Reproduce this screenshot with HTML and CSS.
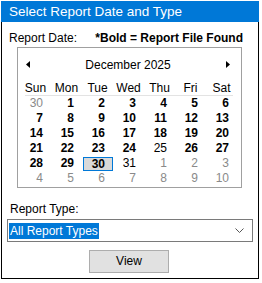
FILE: index.html
```html
<!DOCTYPE html>
<html>
<head>
<meta charset="utf-8">
<link rel="stylesheet" href="styles.css">
</head>
<body>
<div class="panel">
  <div class="title">Select Report Date and Type</div>
  <div class="body">
    <div class="date-row">
      <span>Report Date:</span>
      <span class="legend">*Bold = Report File Found</span>
    </div>
    <div class="calendar">
      <div class="cal-head">
        <svg class="arrow" width="4" height="7" viewBox="0 0 4 7"><path d="M4 0 L0 3.5 L4 7 Z" fill="#000"/></svg>
        <span class="month">December 2025</span>
        <svg class="arrow" width="4" height="7" viewBox="0 0 4 7"><path d="M0 0 L4 3.5 L0 7 Z" fill="#000"/></svg>
      </div>
      <div class="grid dows">
        <span>Sun</span><span>Mon</span><span>Tue</span><span>Wed</span><span>Thu</span><span>Fri</span><span>Sat</span>
      </div>
      <div class="sep"></div>
      <div class="grid days">
        <span class="o">30</span><span class="b">1</span><span class="b">2</span><span class="b">3</span><span class="b">4</span><span class="b">5</span><span class="b">6</span>
        <span class="b">7</span><span class="b">8</span><span class="b">9</span><span class="b">10</span><span class="b">11</span><span class="b">12</span><span class="b">13</span>
        <span class="b">14</span><span class="b">15</span><span class="b">16</span><span class="b">17</span><span class="b">18</span><span class="b">19</span><span class="b">20</span>
        <span class="b">21</span><span class="b">22</span><span class="b">23</span><span class="b">24</span><span>25</span><span class="b">26</span><span class="b">27</span>
        <span class="b">28</span><span class="b">29</span><span class="b sel">30</span><span>31</span><span class="o">1</span><span class="o">2</span><span class="o">3</span>
        <span class="o">4</span><span class="o">5</span><span class="o">6</span><span class="o">7</span><span class="o">8</span><span class="o">9</span><span class="o">10</span>
      </div>
    </div>
    <div class="type-label">Report Type:</div>
    <div class="select">
      <span class="hl">All Report Types</span>
      <svg class="chev" width="9" height="5" viewBox="0 0 9 5"><path d="M0.5 0.5 L4.5 4.5 L8.5 0.5" fill="none" stroke="#555" stroke-width="1"/></svg>
    </div>
    <div class="btn-row">
      <div class="btn">View</div>
    </div>
  </div>
</div>
</body>
</html>
```
FILE: styles.css
```css
html, body {
  margin: 0;
  padding: 0;
  background: #fff;
}
body {
  font-family: "Liberation Sans", Arial, sans-serif;
  font-size: 12px;
  color: #000;
}
.panel {
  margin: 1px 0 0 1px;
  width: 258px;
}
.title {
  height: 21px;
  box-sizing: border-box;
  padding: 2px 0 0 8px;
  line-height: 18px;
  background: #0078d7;
  color: #fff;
  font-size: 13.5px;
}
.body {
  border: 1px solid #000;
  border-top: none;
  height: 257px;
  box-sizing: border-box;
  display: flex;
  flex-direction: column;
}
.date-row {
  display: flex;
  justify-content: space-between;
  padding: 0 15px 0 7px;
  margin-top: 9px;
  line-height: 14px;
}
.legend {
  font-weight: bold;
}
.calendar {
  margin: 2px 0 0 15px;
  width: 225px;
  height: 141px;
  box-sizing: border-box;
  border: 1px solid #a0a0a0;
  padding: 0 3px 0 2px;
}
.cal-head {
  height: 33px;
  display: flex;
  align-items: center;
  justify-content: space-between;
  padding: 0 8px 0 6px;
}
.month {
  line-height: 14px;
}
.grid {
  display: grid;
  grid-template-columns: repeat(7, 31px);
}
.dows span {
  text-align: center;
  line-height: 14px;
  height: 14px;
}
.sep {
  height: 1px;
  background: #e3e3e3;
  margin: 0 5px 0 5px;
}
.days span {
  height: 15px;
  line-height: 15px;
  text-align: right;
  padding-right: 8px;
  box-sizing: border-box;
}
.days .b {
  font-weight: bold;
}
.days .o {
  color: #8a8a8a;
}
.days .sel {
  background: #d9d9d9;
  border: 1px solid #0078d7;
  line-height: 12px;
  height: 14px;
  margin: 1px 0 0 1px;
  width: 30px;
  padding-right: 7px;
}
.type-label {
  margin: 14px 0 0 8px;
  line-height: 14px;
}
.select {
  margin: 3px 0 0 5px;
  width: 246px;
  height: 23px;
  box-sizing: border-box;
  border: 1px solid #7a7a7a;
  display: flex;
  align-items: center;
  justify-content: space-between;
  padding: 0 8px 0 1px;
}
.hl {
  background: #0078d7;
  color: #fff;
  line-height: 16px;
  padding: 0 1px;
}
.chev {
  display: block;
}
.btn-row {
  display: flex;
  justify-content: center;
  margin-top: 8px;
  padding-right: 2px;
}
.btn {
  width: 80px;
  height: 23px;
  box-sizing: border-box;
  border: 1px solid #adadad;
  background: #e1e1e1;
  text-align: center;
  line-height: 21px;
}
```
